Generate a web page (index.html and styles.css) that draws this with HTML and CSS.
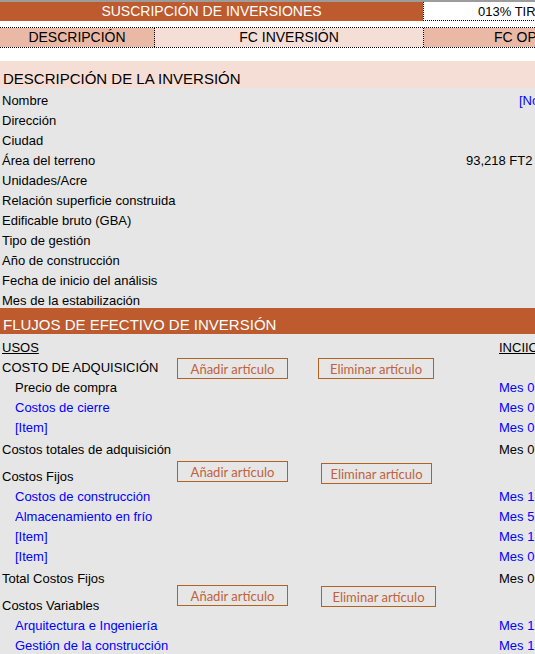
FILE: index.html
```
<!DOCTYPE html>
<html lang="es">
<head>
<meta charset="utf-8">
<title>Suscripción de inversiones</title>
<link rel="stylesheet" href="styles.css">
</head>
<body>
<div class="sheet">
  <div class="topline"></div>
  <div class="titlebar">
    <div class="title">SUSCRIPCIÓN DE INVERSIONES</div>
    <div class="tir">013% TIR</div>
  </div>
  <div class="tabs">
    <div class="tab tab-dark tab-desc">DESCRIPCIÓN</div>
    <div class="tab tab-light tab-inv">FC INVERSIÓN</div>
    <div class="tab tab-dark tab-op">FC OPERACIÓN</div>
  </div>

  <div class="section-light">DESCRIPCIÓN DE LA INVERSIÓN</div>

  <div class="grey">
    <div class="rows-desc">
      <div class="row"><span class="lbl l519">Nombre</span><span class="val blue">[Nombre]</span></div>
      <div class="row"><span class="lbl">Dirección</span></div>
      <div class="row"><span class="lbl">Ciudad</span></div>
      <div class="row"><span class="lbl l466">Área del terreno</span><span class="val">93,218 FT2</span></div>
      <div class="row"><span class="lbl">Unidades/Acre</span></div>
      <div class="row"><span class="lbl">Relación superficie construida</span></div>
      <div class="row"><span class="lbl">Edificable bruto (GBA)</span></div>
      <div class="row"><span class="lbl">Tipo de gestión</span></div>
      <div class="row"><span class="lbl">Año de construcción</span></div>
      <div class="row"><span class="lbl">Fecha de inicio del análisis</span></div>
      <div class="row"><span class="lbl">Mes de la estabilización</span></div>
    </div>

    <div class="section-dark">FLUJOS DE EFECTIVO DE INVERSIÓN</div>

    <div class="row mt3"><span class="lbl l499"><u>USOS</u></span><span class="val"><u>INCIIO</u></span></div>
    <div class="row">
      <span class="lbl">COSTO DE ADQUISICIÓN</span>
      <button class="btn b-add a1">Añadir artículo</button>
      <button class="btn b-del d1">Eliminar artículo</button>
    </div>
    <div class="row"><span class="lbl l499 ind">Precio de compra</span><span class="val blue">Mes 0</span></div>
    <div class="row"><span class="lbl l499 ind blue">Costos de cierre</span><span class="val blue">Mes 0</span></div>
    <div class="row"><span class="lbl l499 ind blue">[Item]</span><span class="val blue">Mes 0</span></div>
    <div class="row mt2"><span class="lbl l499">Costos totales de adquisición</span><span class="val">Mes 0</span></div>

    <div class="row mt7">
      <span class="lbl">Costos Fijos</span>
      <button class="btn b-add a2">Añadir artículo</button>
      <button class="btn b-del d2">Eliminar artículo</button>
    </div>
    <div class="row"><span class="lbl l499 ind blue">Costos de construcción</span><span class="val blue">Mes 1</span></div>
    <div class="row"><span class="lbl l499 ind blue">Almacenamiento en frío</span><span class="val blue">Mes 5</span></div>
    <div class="row"><span class="lbl l499 ind blue">[Item]</span><span class="val blue">Mes 1</span></div>
    <div class="row"><span class="lbl l499 ind blue">[Item]</span><span class="val blue">Mes 0</span></div>
    <div class="row mt2"><span class="lbl l499">Total Costos Fijos</span><span class="val">Mes 0</span></div>

    <div class="row mt7">
      <span class="lbl">Costos Variables</span>
      <button class="btn b-add a3">Añadir artículo</button>
      <button class="btn b-del d3">Eliminar artículo</button>
    </div>
    <div class="row"><span class="lbl l499 ind blue">Arquitectura e Ingeniería</span><span class="val blue">Mes 1</span></div>
    <div class="row"><span class="lbl l499 ind blue">Gestión de la construcción</span><span class="val blue">Mes 1</span></div>
  </div>
</div>
</body>
</html>
```
FILE: styles.css
```
html, body {
  margin: 0;
  padding: 0;
  background: #ffffff;
  overflow: hidden;
}
body {
  font-family: "Liberation Sans", Arial, sans-serif;
  font-size: 13px;
  color: #000;
}
.sheet {
  width: 535px;
  overflow: hidden;
}
.topline {
  height: 2px;
  background: #9c9c9c;
}
.titlebar {
  display: flex;
  height: 19px;
}
.title {
  flex: 0 0 423px;
  background: #bd5a2e;
  color: #fff;
  text-align: center;
  font-size: 14px;
  line-height: 19px;
}
.tir {
  flex: 1 0 auto;
  background: #fff;
  border-left: 1px dotted #000;
  border-bottom: 1px dotted #000;
  height: 18px;
  padding-left: 54px;
  line-height: 19px;
  white-space: nowrap;
}
.tabs {
  display: flex;
  margin-top: 6px;
  height: 19px;
  border-top: 1px dotted #000;
  border-bottom: 1px dotted #000;
  white-space: nowrap;
}
.tab {
  line-height: 19px;
  font-size: 14px;
  text-align: center;
  overflow: hidden;
}
.tab-dark { background: #eab9a5; }
.tab-light { background: #f5ded5; }
.tab-desc { flex: 0 0 154px; border-right: 1px dotted #000; }
.tab-inv { flex: 0 0 268px; border-right: 1px dotted #000; }
.tab-op { flex: 0 0 200px; text-align: left; padding-left: 70px; }

.section-light {
  margin-top: 13px;
  height: 27px;
  background: #f5ded5;
  font-size: 15px;
  line-height: 36px;
  padding-left: 3px;
  white-space: nowrap;
}
.grey {
  background: #e6e6e6;
  height: 580px;
}
.row {
  position: relative;
  display: flex;
  height: 20px;
  line-height: 22px;
  white-space: nowrap;
}
.rows-desc .row {
  line-height: 26px;
}
.lbl {
  padding-left: 2px;
}
.lbl.ind { padding-left: 15px; }
.l519 { flex: 0 0 517px; }
.l499 { flex: 0 0 497px; }
.l499.ind { flex: 0 0 484px; }
.l466 { flex: 0 0 464px; }
.blue { color: #0000ff; }
.mt2 { margin-top: 2px; }
.mt3 { margin-top: 3px; }
.mt7 { margin-top: 7px; }

.section-dark {
  height: 26px;
  background: #bd5a2e;
  color: #fff;
  font-size: 15px;
  line-height: 34px;
  padding-left: 3px;
  white-space: nowrap;
  overflow: hidden;
}

.btn {
  position: absolute;
  box-sizing: border-box;
  height: 21px;
  margin: 0;
  padding: 0;
  background: transparent;
  border: 1px solid #b0621f;
  color: #c0623c;
  font-family: "Lato", sans-serif;
  font-size: 13px;
  line-height: 18px;
  text-align: center;
}
.b-add { left: 177px; width: 111px; }
.a1 { top: 1px; }
.d1 { top: 1px; left: 318px; width: 116px; }
.a2 { top: -5px; }
.d2 { top: -3px; left: 321px; width: 111px; }
.a3 { top: -10px; }
.d3 { top: -9px; left: 321px; width: 115px; }
```
